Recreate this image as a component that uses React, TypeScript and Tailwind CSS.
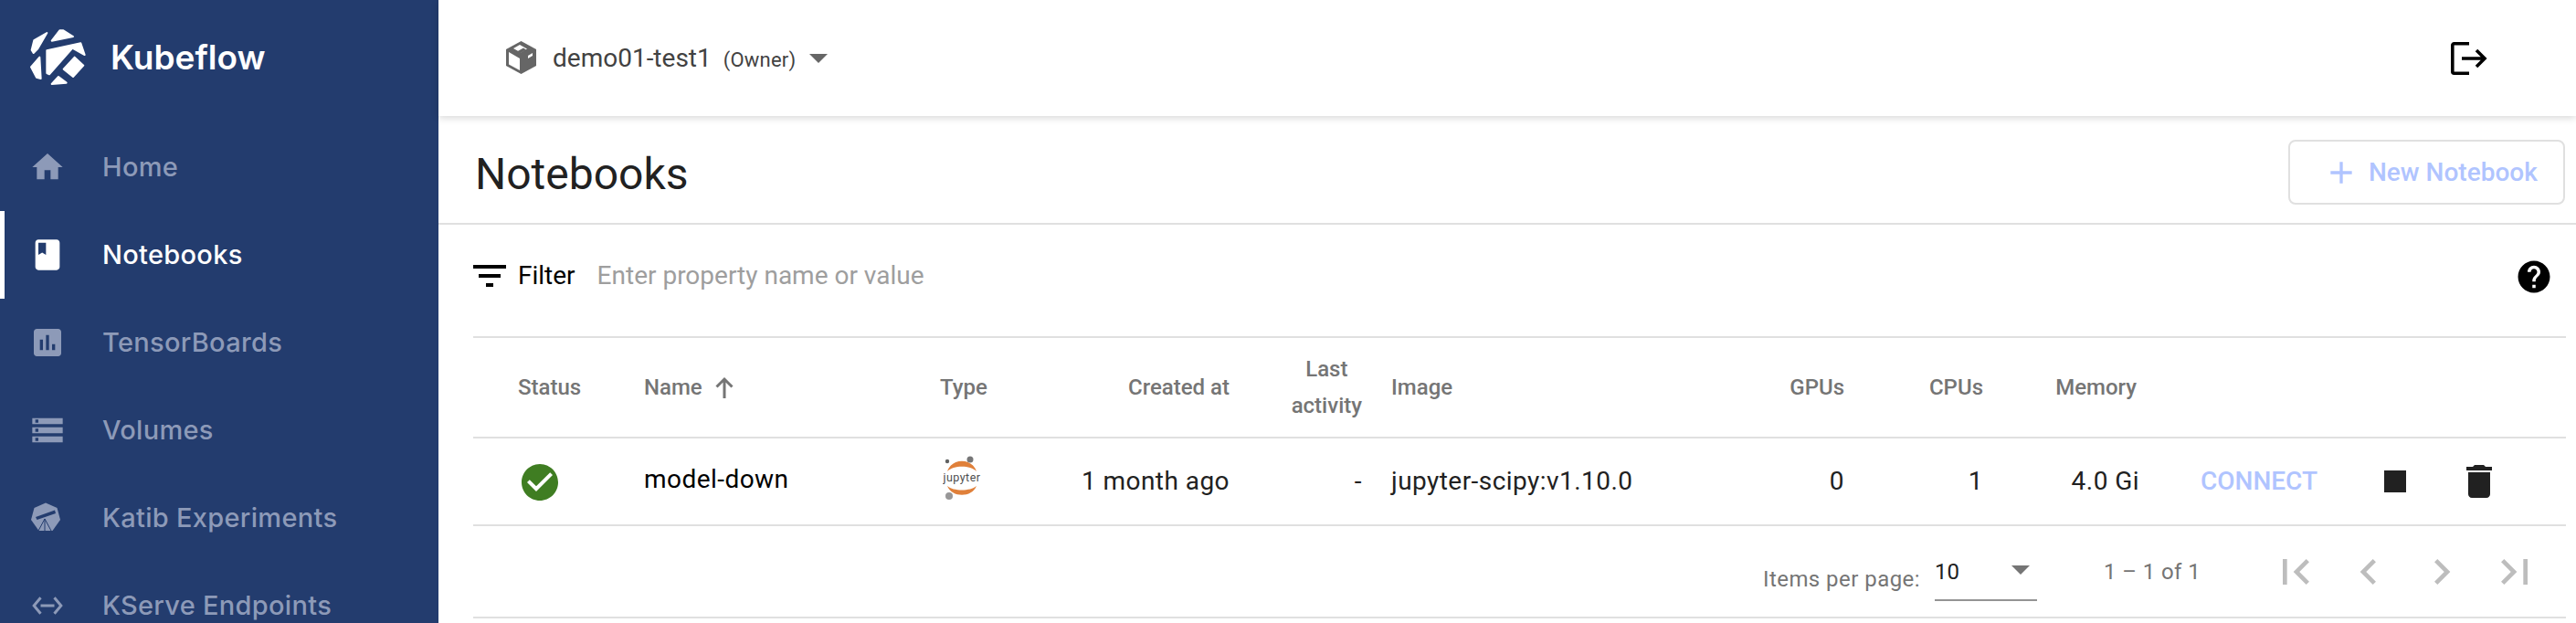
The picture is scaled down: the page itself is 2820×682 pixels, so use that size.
import React from 'react';

const rowGrid = 'grid grid-cols-[187px_324px_101px_216px_145px_409px_119px_152px_168px_1fr] items-center';

const Icon = ({ d, className }: { d: string; className: string }) => (
  <svg viewBox="0 0 24 24" className={className} fill="currentColor">
    <path d={d} />
  </svg>
);

// Kubeflow logo, shards traced from the screenshot
const Logo = () => (
  <svg viewBox="0 0 300 240" className="w-[100px] h-[80px] shrink-0" fill="#fff" stroke="#fff" strokeWidth="6" strokeLinejoin="round">
    <polygon points="44,104 52,72 94,48 64,100 50,114" />
    <polygon points="110,74 136,40 148,40 180,60" />
    <polygon points="94,106 205,82 218,120 178,98 102,184 94,180" />
    <polygon points="149,167 185,128 214,155 180,192" />
    <polygon points="42,160 70,128 74,198 60,194" />
    <polygon points="110,216 132,192 158,212" />
  </svg>
);

const KatibIcon = () => (
  <svg viewBox="0 0 34 34" className="w-[34px] h-[34px] -ml-[5px] mb-[1px]">
    <polygon points="17,0.5 29.5,6 33,19 24.5,31 9.5,31 1,19 4.5,6" fill="#8d9ab8" />
    <polygon points="6,16 27,8.5 28,12 7.5,19" fill="#233c6e" />
    <path d="M16 18 L9 31 M16 18 L16 31 M16 18 L23 31" stroke="#233c6e" strokeWidth="1" fill="none" />
  </svg>
);

const nav = [
  {
    label: 'Home',
    icon: <Icon d="M10 20v-6h4v6h5v-8h3L12 3 2 12h3v8z" className="w-[40px] h-[40px] text-[#8d9ab8]" />,
  },
  {
    label: 'Notebooks',
    active: true,
    icon: <Icon d="M18 2H6c-1.1 0-2 .9-2 2v16c0 1.1.9 2 2 2h12c1.1 0 2-.9 2-2V4c0-1.1-.9-2-2-2zM6 4h5v8l-2.5-1.5L6 12V4z" className="w-[40px] h-[40px] text-white" />,
  },
  {
    label: 'TensorBoards',
    icon: <Icon d="M19 3H5c-1.1 0-2 .9-2 2v14c0 1.1.9 2 2 2h14c1.1 0 2-.9 2-2V5c0-1.1-.9-2-2-2zM9 17H7v-7h2v7zm4 0h-2V7h2v10zm4 0h-2v-4h2v4z" className="w-[40px] h-[40px] text-[#8d9ab8]" />,
  },
  {
    label: 'Volumes',
    icon: <Icon d="M2 20h20v-4H2v4zm2-3h2v2H4v-2zM2 4v4h20V4H2zm4 3H4V5h2v2zm-4 7h20v-4H2v4zm2-3h2v2H4v-2z" className="w-[40px] h-[40px] text-[#8d9ab8]" />,
  },
  { label: 'Katib Experiments', icon: <KatibIcon /> },
  {
    label: 'KServe Endpoints',
    icon: <Icon d="M7.77 6.76L6.23 5.48.82 12l5.41 6.52 1.54-1.28L3.42 12l4.35-5.24zM7 13h10v-2H7v2zm10.77-7.52l-1.54 1.28L20.58 12l-4.35 5.24 1.54 1.28L23.18 12l-5.41-6.52z" className="w-[36px] h-[36px] text-[#8d9ab8]" />,
  },
];

const Sidebar = () => (
  <aside className="w-[480px] h-[682px] shrink-0 overflow-hidden bg-[#233c6e] font-['Inter',sans-serif]">
    <div className="h-[135px] flex items-start pt-[20px] pl-[20px]">
      <Logo />
      <span className="ml-[1px] mt-[20px] text-[37px] leading-[46px] font-semibold text-white">Kubeflow</span>
    </div>
    {nav.map((item) => (
      <div key={item.label} className={`h-[96px] flex items-center border-l-[5px] ${item.active ? 'border-white text-white' : 'border-transparent text-[#8d9ab8]'}`}>
        <span className="w-[107px] pl-[23px] pr-[36px] flex items-center justify-center">{item.icon}</span>
        <span className="text-[29px] font-medium tracking-[0.3px] whitespace-nowrap">{item.label}</span>
      </div>
    ))}
  </aside>
);

const TopBar = () => (
  <header className="relative z-10 h-[127px] flex items-center pl-[74px] pr-[97px] bg-white shadow-[0_2px_8px_rgba(0,0,0,0.16)]">
    <svg viewBox="0 0 33 36" className="w-[33px] h-[36px] mb-[1px]">
      <polygon points="16.5,0 33,9 33,27 16.5,36 0,27 0,9" fill="#666" />
      <polygon points="3,12 15,19 15,32 3,25.5" fill="#fff" />
      <polygon points="8,8 15,4 23,8.5 16,12.5" fill="#fff" />
      <polygon points="14,14 11,12 19,7.5 22,9.5" fill="#666" />
      <polygon points="24,16 29,13 29,16 24,19" fill="#fff" />
    </svg>
    <span className="ml-[18px] text-[28px] text-[#424242]">demo01-test1</span>
    <span className="ml-[13px] mt-[3px] text-[22px] tracking-[0.2px] text-[#424242]">(Owner)</span>
    <svg viewBox="0 0 20 10" className="ml-[15px] w-[20px] h-[10px] mt-[1px]">
      <polygon points="0,0 20,0 10,10" fill="#666" />
    </svg>
    <svg viewBox="0 0 40 36" className="ml-auto w-[40px] h-[36px]" fill="none" stroke="#000" strokeWidth="3.6">
      <path d="M20 1.8H3.5A1.7 1.7 0 0 0 1.8 3.5v29a1.7 1.7 0 0 0 1.7 1.7H20" />
      <path d="M12 18h25M28 9l9 9-9 9" />
    </svg>
  </header>
);

const JupyterIcon = () => (
  <svg viewBox="0 0 42 48" className="ml-[3px] w-[42px] h-[48px] mb-[8px]">
    <circle cx="30" cy="4" r="3.5" fill="#767677" />
    <circle cx="5" cy="6" r="2.2" fill="#616262" />
    <circle cx="7" cy="44" r="4" fill="#989798" />
    <path d="M5 17 C10 2 32 2 37 17 C30 10 12 10 5 17z" fill="#e0803a" />
    <path d="M5 33 C10 46 32 46 37 33 C30 39 12 39 5 33z" fill="#e0803a" />
    <text x="21" y="28" textAnchor="middle" fontSize="12.5" fill="#4e4e4e" fontFamily="Roboto, sans-serif">jupyter</text>
  </svg>
);

const NotebooksTable = () => (
  <div className="ml-[38px] mr-[11px] font-['Roboto',sans-serif]">
    <div className={`${rowGrid} h-[112px] border-y-2 border-[#e0e0e0] text-[24px] font-medium text-[#757575]`}>
      <div className="pl-[49px]">Status</div>
      <div className="flex items-center">
        Name
        <svg viewBox="0 0 20 24" className="ml-[14px] w-[20px] h-[24px]" fill="none" stroke="currentColor" strokeWidth="3">
          <path d="M10 24V3M1.5 11.5 10 3l8.5 8.5" />
        </svg>
      </div>
      <div>Type</div>
      <div className="text-right">Created at</div>
      <div className="justify-self-end text-center leading-[40px]">
        Last
        <br />
        activity
      </div>
      <div className="pl-[32px]">Image</div>
      <div className="text-right">GPUs</div>
      <div className="text-right">CPUs</div>
      <div className="text-right">Memory</div>
      <div />
    </div>
    <div className={`${rowGrid} h-[96px] border-b-2 border-[#e0e0e0] text-[28px] tracking-[0.45px] text-[#212121]`}>
      <div className="pl-[49px] mt-[1px]">
        <Icon d="M12 2C6.48 2 2 6.48 2 12s4.48 10 10 10 10-4.48 10-10S17.52 2 12 2zm-2 15l-5-5 1.41-1.41L10 14.17l7.59-7.59L19 8l-9 9z" className="w-[48px] h-[48px] text-[#3f7d22]" />
      </div>
      <div className="text-black mb-[4px]">model-down</div>
      <div>
        <JupyterIcon />
      </div>
      <div className="text-right">1 month ago</div>
      <div className="text-right">-</div>
      <div className="pl-[32px]">jupyter-scipy:v1.10.0</div>
      <div className="text-right">0</div>
      <div className="text-right">1</div>
      <div className="text-right -mr-[3px]">4.0 Gi</div>
      <div className="flex items-center pl-[70px]">
        <span className="w-[127px] font-medium tracking-normal text-[#b0c4ff]">CONNECT</span>
        <Icon d="M6 6h12v12H6z" className="ml-[62px] w-[48px] h-[48px]" />
        <Icon d="M6 19c0 1.1.9 2 2 2h8c1.1 0 2-.9 2-2V7H6v12zM19 4h-3.5l-1-1h-5l-1 1H5v2h14V4z" className="ml-[44px] w-[48px] h-[48px]" />
      </div>
    </div>
    <div className="h-[101px] flex items-center justify-end border-b-2 border-[#e0e0e0] pr-[16px] text-[24px] text-[#757575]">
      <span className="mt-[16px] tracking-[0.45px]">Items per page:</span>
      <div className="ml-[16px] mt-[14px] w-[112px] h-[50px] flex items-start justify-between border-b-2 border-[#949494] pr-[8px] text-[#212121]">
        <span>10</span>
        <svg viewBox="0 0 20 10" className="mt-[11px] w-[20px] h-[10px]">
          <polygon points="0,0 20,0 10,10" fill="#757575" />
        </svg>
      </div>
      <span className="ml-[73px] w-[170px] tracking-[0.4px]">1 – 1 of 1</span>
      <div className="flex text-[#bdbdbd]">
        {[
          'M18.41 16.59L13.82 12l4.59-4.59L17 6l-6 6 6 6zM6 6h2v12H6z',
          'M15.41 7.41L14 6l-6 6 6 6 1.41-1.41L10.83 12z',
          'M10 6L8.59 7.41 13.17 12l-4.58 4.59L10 18l6-6z',
          'M5.59 7.41L10.18 12l-4.59 4.59L7 18l6-6-6-6zM16 6h2v12h-2z',
        ].map((d) => (
          <span key={d} className="w-[80px] flex justify-center">
            <Icon d={d} className="w-[56px] h-[56px]" />
          </span>
        ))}
      </div>
    </div>
  </div>
);

export default function App() {
  return (
    <div className="flex w-[2820px] h-[682px] overflow-hidden bg-white font-['Roboto',sans-serif]">
      <Sidebar />
      <main className="flex-1 min-w-0">
        <TopBar />
        <div className="h-[119px] flex items-center justify-between pl-[40px] pr-[12px] border-b-2 border-[#e0e0e0]">
          <h1 className="mt-[10px] text-[48px] text-[#212121]">Notebooks</h1>
          <button className="mt-[6px] w-[303px] h-[71px] flex items-center pl-[36px] rounded-lg border-2 border-[#e0e0e0] text-[28px] font-medium text-[#b0c4ff]">
            <Icon d="M19 13h-6v6h-2v-6H5v-2h6V5h2v6h6v2z" className="w-[40px] h-[40px] mr-[10px]" />
            New Notebook
          </button>
        </div>
        <div className="h-[122px] pb-[11px] flex items-center ml-[38px] mr-[11px]">
          <Icon d="M10 18h4v-2h-4v2zM3 6v2h18V6H3zm3 7h12v-2H6v2z" className="w-[48px] h-[48px] -ml-[6px]" />
          <span className="ml-[7px] text-[28px] text-black">Filter</span>
          <span className="ml-[24px] text-[28px] text-[#9e9e9e]">Enter property name or value</span>
          <Icon d="M12 2C6.48 2 2 6.48 2 12s4.48 10 10 10 10-4.48 10-10S17.52 2 12 2zm1 17h-2v-2h2v2zm2.07-7.75l-.9.92C13.45 12.9 13 13.5 13 15h-2v-.5c0-1.1.45-2.1 1.17-2.83l1.24-1.26c.37-.36.59-.86.59-1.41 0-1.1-.9-2-2-2s-2 .9-2 2H8c0-2.21 1.79-4 4-4s4 1.79 4 4c0 .88-.36 1.68-.93 2.25z" className="ml-auto mr-[14px] mt-[2px] w-[42px] h-[42px] text-black" />
        </div>
        <NotebooksTable />
      </main>
    </div>
  );
}
